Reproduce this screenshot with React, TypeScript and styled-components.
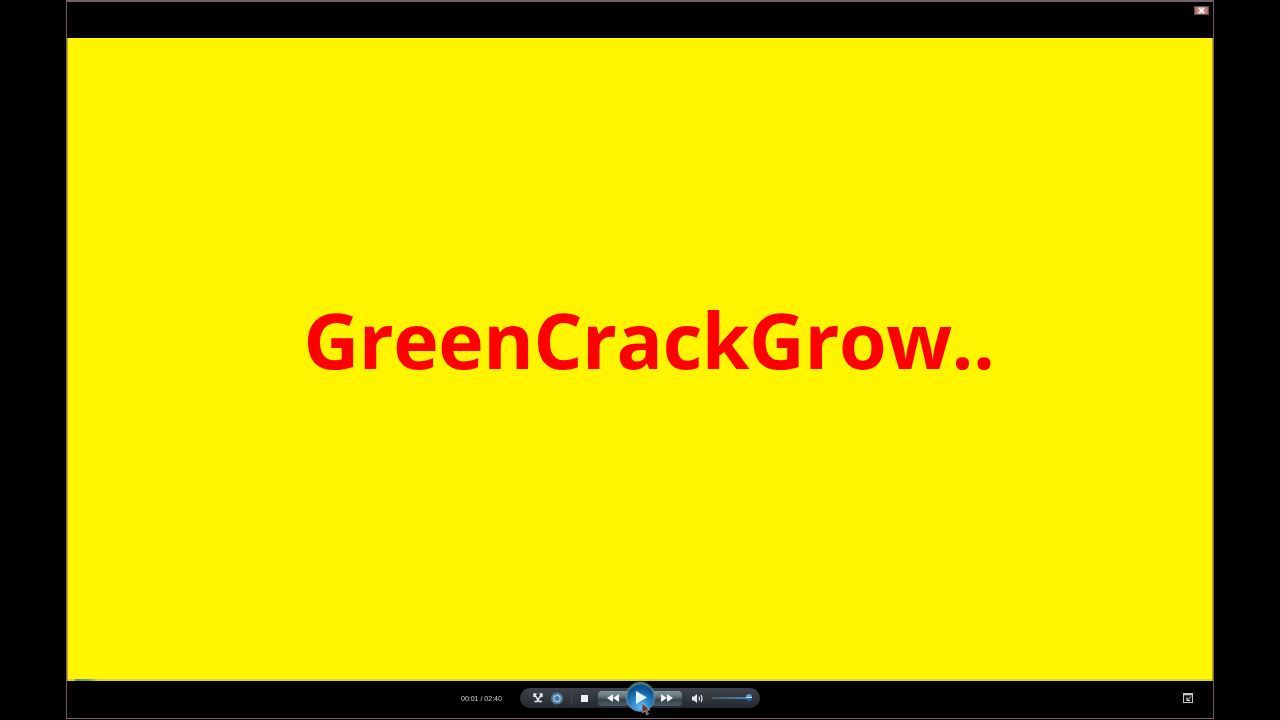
import styled, { createGlobalStyle } from "styled-components";

const GlobalStyle = createGlobalStyle`
  html, body {
    margin: 0;
    height: 720px;
    overflow: hidden;
    background: #000;
    font-family: "Liberation Sans", Arial, sans-serif;
  }
`;

const Page = styled.div`
  width: 1280px;
  height: 720px;
  display: flex;
  justify-content: center;
  background: #000;
`;

const PlayerWindow = styled.div`
  box-sizing: border-box;
  width: 1148px;
  height: 719px;
  border: 1px solid #6e5a60;
  border-top: 2px solid #74616a;
  border-bottom: 1px solid #7a6068;
  display: flex;
  flex-direction: column;
  background: #000;
`;

const TitleBar = styled.div`
  height: 36px;
  flex: none;
  display: flex;
  justify-content: flex-end;
  align-items: flex-start;
  padding: 4px 4px 0 0;
  box-sizing: border-box;
`;

const CloseButton = styled.div`
  width: 15px;
  height: 9px;
  display: flex;
  align-items: center;
  justify-content: center;
  background: linear-gradient(90deg, #b06a68, #d8a8a6 50%, #b06a68);
  border: 1px solid #6a4548;
  box-sizing: border-box;
  color: #fff;
`;

const Video = styled.div`
  position: relative;
  flex: 1;
  display: flex;
  align-items: center;
  justify-content: center;
  background: #fff500;
  border-left: 1px solid #d9a800;
  border-right: 1px solid #d9a800;
  box-shadow: inset 0 -2px 0 #d7d43a;
`;

const Headline = styled.h1`
  margin: 0 0 40px 18px;
  color: #ff0000;
  font-family: "Open Sans", "Noto Sans", sans-serif;
  font-size: 77px;
  font-weight: 700;
  letter-spacing: -0.45px;
  line-height: 1;
  white-space: nowrap;
`;

const SeekProgress = styled.div`
  position: absolute;
  left: 7px;
  bottom: 0;
  width: 22px;
  height: 2px;
  background: linear-gradient(90deg, #5f8a84, #7fa48a 70%, #c9d650);
`;

const ControlBar = styled.div`
  height: 37px;
  flex: none;
  display: grid;
  grid-template-columns: 1fr auto 1fr;
  align-items: center;
  padding-bottom: 3px;
  box-sizing: border-box;
  background: #000;
`;

const TimeLabel = styled.span`
  justify-self: end;
  margin-right: 18px;
  color: #d4d4d4;
  font-size: 7px;
  white-space: nowrap;
  will-change: transform;
`;

const Capsule = styled.div`
  position: relative;
  width: 240px;
  height: 20px;
  display: flex;
  align-items: center;
  padding-left: 13px;
  box-sizing: border-box;
  border-radius: 10px;
  background: linear-gradient(180deg, #3d4349, #2f343a 60%, #262a2f);
`;

const IconSlot = styled.div<{ $width: number; $gap?: number }>`
  width: ${(p) => p.$width}px;
  margin-right: ${(p) => p.$gap ?? 0}px;
  flex: none;
  display: flex;
  align-items: center;
  justify-content: center;
`;

const Divider = styled.div`
  width: 1px;
  height: 14px;
  margin: 0 9px 0 8px;
  background: #40464c;
`;

const Transport = styled.div`
  width: 84px;
  height: 15px;
  margin: 0 10px 0 0;
  flex: none;
  display: flex;
  justify-content: space-between;
  align-items: center;
  padding: 0 9px;
  box-sizing: border-box;
  border-radius: 4px;
  background: linear-gradient(180deg, #84929c 0%, #677580 35%, #36434d 58%, #4e5a64 100%);
`;

const PlayButton = styled.div`
  position: absolute;
  left: 106px;
  top: -5px;
  width: 29px;
  height: 29px;
  display: flex;
  align-items: center;
  justify-content: center;
  border-radius: 50%;
  border: 1px solid #6d93a8;
  box-sizing: border-box;
  background: radial-gradient(circle at 50% 85%, #5cbcf4 0%, #1f78bc 45%, #0c4f8c 72%, #1d5b86 100%);
  box-shadow: 0 -1px 1px #6f9a5a;
`;

const VolumeTrack = styled.div`
  position: relative;
  width: 38px;
  height: 2px;
  margin-left: 9px;
  background: linear-gradient(90deg, #46596a, #4f86bd);
`;

const VolumeThumb = styled.div`
  position: absolute;
  right: -2px;
  top: -3px;
  width: 6px;
  height: 7px;
  border-radius: 3px;
  background: linear-gradient(180deg, #4f9fe4 0 40%, #d7e8f5 40% 58%, #1e67ac 58%);
`;

const Cursor = styled.svg`
  position: absolute;
  left: 122px;
  top: 15px;
`;

const FullscreenSlot = styled.div`
  justify-self: end;
  margin-right: 20px;
  display: flex;
`;

export default function App() {
  return (
    <Page>
      <GlobalStyle />
      <PlayerWindow>
        <TitleBar>
          <CloseButton>
            <svg width="7" height="7" viewBox="0 0 7 7">
              <path d="M1 1l5 5M6 1L1 6" stroke="#fff" strokeWidth="1.6" />
            </svg>
          </CloseButton>
        </TitleBar>
        <Video>
          <Headline>GreenCrackGrow..</Headline>
          <SeekProgress />
        </Video>
        <ControlBar>
          <TimeLabel>00:01 / 02:40</TimeLabel>
          <Capsule>
            <IconSlot $width={10} $gap={8}>
              <svg width="10" height="10" viewBox="0 0 10 10" fill="none" stroke="#e4e8ea" strokeWidth="1.4">
                <path d="M1.500 1.500L6 8.500h3M8.500 1.500L4 8.500H1.500M1 4V1h2.500M9 4V1H6.500" />
              </svg>
            </IconSlot>
            <IconSlot $width={12}>
              <svg width="13" height="13" viewBox="0 0 13 13" fill="none">
                <circle cx="6.500" cy="6.500" r="6.500" fill="#4f7c9c" />
                <circle cx="6.500" cy="6.500" r="3.400" stroke="#a9d2ec" strokeWidth="1.200" />
                <path d="M6.500 1.500v3" stroke="#4f7c9c" strokeWidth="1.500" />
                <path d="M6.500 2l1.800 1.200-1.800 1.200z" fill="#cfe6f4" />
              </svg>
            </IconSlot>
            <Divider />
            <IconSlot $width={7} $gap={10}>
              <svg width="7" height="7" viewBox="0 0 7 7">
                <rect width="7" height="7" fill="#eef0f1" />
              </svg>
            </IconSlot>
            <Transport>
              <svg width="12" height="8" viewBox="0 0 12 8" fill="#eef2f4">
                <path d="M6 0v8L0 4zM12 0v8L6 4z" />
              </svg>
              <svg width="12" height="8" viewBox="0 0 12 8" fill="#eef2f4">
                <path d="M0 0v8l6-4zM6 0v8l6-4z" />
              </svg>
            </Transport>
            <PlayButton>
              <svg width="12" height="13" viewBox="0 0 12 13">
                <path d="M1 0l11 6.500L1 13z" fill="#e9f3fa" />
              </svg>
            </PlayButton>
            <IconSlot $width={11}>
              <svg width="11" height="9" viewBox="0 0 11 9" fill="none">
                <path d="M0 2.500h2l3-2.500v9L2 6.500H0z" fill="#e4e8ea" />
                <path d="M7 2.500q1 2 0 4M9 1q2 3.500 0 7" stroke="#e4e8ea" strokeWidth="1.200" />
              </svg>
            </IconSlot>
            <VolumeTrack>
              <VolumeThumb />
            </VolumeTrack>
            <Cursor width="9" height="12" viewBox="0 0 9 12">
              <path d="M0 0l8 7H4.500l2 4-1.500 1-2-4L0 10z" fill="#5a3a3a" stroke="#e8d8d8" strokeWidth="0.600" />
            </Cursor>
          </Capsule>
          <FullscreenSlot>
            <svg width="10" height="10" viewBox="0 0 10 10" fill="none">
              <rect x="0.500" y="0.500" width="9" height="9" fill="#111" stroke="#c8c8c8" />
              <path d="M1 1.500h8" stroke="#c8c8c8" strokeWidth="1.500" />
              <path d="M8 3.500L4.500 7M4 4.500V7.500h3" stroke="#e6e6e6" />
            </svg>
          </FullscreenSlot>
        </ControlBar>
      </PlayerWindow>
    </Page>
  );
}
